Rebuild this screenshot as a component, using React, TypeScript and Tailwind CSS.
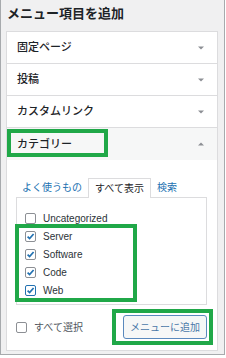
import React from 'react';

const font = { fontFamily: '"Liberation Sans", "Noto Sans CJK JP", sans-serif' };

function Arrow({ up = false }: { up?: boolean }) {
  return (
    <svg width="6" height="4" viewBox="0 0 6 4" className="shrink-0">
      {up ? (
        <path d="M0 3.5 L3 0.5 L6 3.5 Z" fill="#8c8f94" />
      ) : (
        <path d="M0 0.5 L6 0.5 L3 3.5 Z" fill="#8c8f94" />
      )}
    </svg>
  );
}

function Checkbox({ checked = false, focused = false }: { checked?: boolean; focused?: boolean }) {
  return (
    <span
      className={`flex h-[11px] w-[11px] shrink-0 items-center justify-center rounded-[2px] bg-white ${
        focused ? 'border-[1.5px] border-[#2271b1]' : 'border border-[#8c8f94]'
      }`}
    >
      {checked && (
        <svg width="9" height="9" viewBox="0 0 9 9">
          <path d="M1.6 4.6 L3.6 6.6 L7.6 2" fill="none" stroke="#2271b1" strokeWidth="1.7" />
        </svg>
      )}
    </span>
  );
}

const sections = ['固定ページ', '投稿', 'カスタムリンク'];

const categories = [
  { name: 'Uncategorized', checked: false },
  { name: 'Server', checked: true },
  { name: 'Software', checked: true },
  { name: 'Code', checked: true },
  { name: 'Web', checked: true, focused: true },
];

export default function App() {
  return (
    <div className="relative h-[358px] w-[226px] bg-white" style={font}>
      <div className="h-[355px] w-[225px] border-x border-b border-[#a7aaad] bg-[#f0f0f1] pl-[5px]">
        <div className="flex h-[31px] items-center pl-[1px] pb-[3px] text-[13px] font-bold text-[#1d2327]">
          メニュー項目を追加
        </div>

        <div className="h-[320px] w-[212px] border border-[#dcdcde] bg-white">
          {sections.map((s) => (
            <div
              key={s}
              className="flex h-[32px] items-center justify-between border-b border-[#dcdcde] pl-[10px] pr-[13px] text-[11px] font-medium text-[#1d2327]"
            >
              <span>{s}</span>
              <Arrow />
            </div>
          ))}

          <div className="flex h-[32px] items-center justify-between bg-[#f6f7f7] pl-[10px] pr-[13px] text-[11px] font-medium text-[#1d2327]">
            <span>カテゴリー</span>
            <Arrow up />
          </div>

          <div className="px-[9px] pt-[18px]">
            <div className="flex h-[19px] items-end text-[10px]">
              <div className="flex h-[19px] w-[72px] items-center justify-center text-[#2271b1]">
                よく使うもの
              </div>
              <div className="relative z-10 -mb-px flex h-[20px] w-[63px] items-center justify-center border border-b-0 border-[#dcdcde] bg-white text-[#1d2327]">
                すべて表示
              </div>
              <div className="flex h-[19px] items-center pl-[6px] text-[#2271b1]">検索</div>
            </div>

            <div className="h-[108px] w-[191px] border border-[#dcdcde] pl-[8px] pt-[11px]">
              {categories.map((c) => (
                <label key={c.name} className="flex h-[18px] items-center gap-[7px] text-[10px] text-[#2c3338]">
                  <Checkbox checked={c.checked} focused={c.focused} />
                  <span>{c.name}</span>
                </label>
              ))}
            </div>
          </div>

          <div className="flex items-center justify-between pl-[9px] pr-[10px] pt-[10px]">
            <label className="flex items-center gap-[7px] text-[10px] text-[#50575e]">
              <Checkbox />
              <span>すべて選択</span>
            </label>
            <button className="flex h-[24px] w-[84px] items-center justify-center rounded-[3px] border border-[#5a89bd] bg-[#f6f7f7] text-[10px] text-[#4a77a8]">
              メニューに追加
            </button>
          </div>
        </div>
      </div>

      <div className="pointer-events-none absolute left-[7px] top-[129px] h-[28px] w-[101px] border-4 border-[#20a848]" />
      <div className="pointer-events-none absolute left-[15px] top-[224px] h-[78px] w-[122px] border-4 border-[#20a848]" />
      <div className="pointer-events-none absolute left-[112px] top-[309px] h-[36px] w-[101px] border-4 border-[#20a848]" />
    </div>
  );
}
